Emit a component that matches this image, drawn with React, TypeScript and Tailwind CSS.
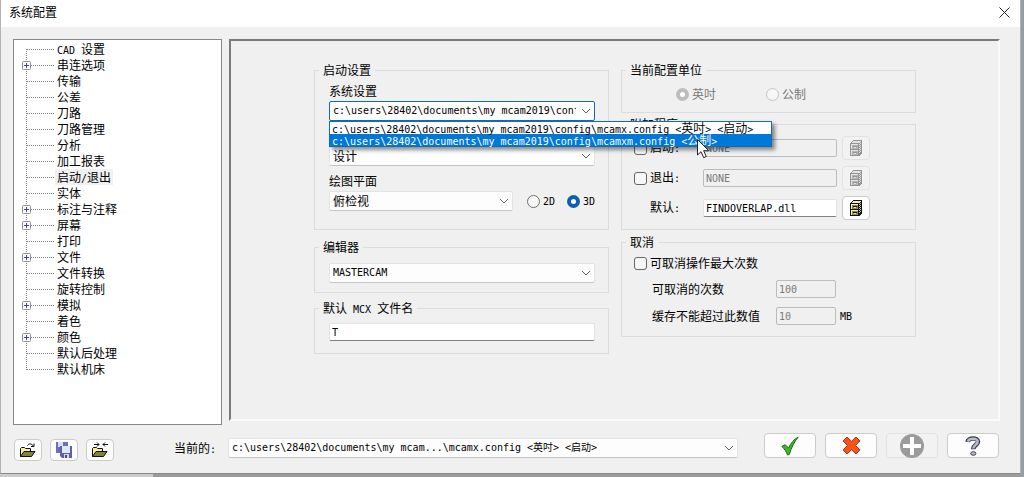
import React, { useState } from "react";
import clsx from "clsx";

const CONFIG_DIR = "c:\\users\\28402\\documents\\my mcam2019\\config\\";

const configFiles = [
  CONFIG_DIR + "mcamx.config <英吋> <启动>",
  CONFIG_DIR + "mcamxm.config <公制>",
];

const treeItems = [
  { label: "CAD 设置" },
  { label: "串连选项", expandable: true },
  { label: "传输" },
  { label: "公差" },
  { label: "刀路" },
  { label: "刀路管理" },
  { label: "分析" },
  { label: "加工报表" },
  { label: "启动/退出" },
  { label: "实体" },
  { label: "标注与注释", expandable: true },
  { label: "屏幕", expandable: true },
  { label: "打印" },
  { label: "文件", expandable: true },
  { label: "文件转换" },
  { label: "旋转控制" },
  { label: "模拟", expandable: true },
  { label: "着色" },
  { label: "颜色", expandable: true },
  { label: "默认后处理" },
  { label: "默认机床" },
];

// Latin runs are set in a half-width mono face, the rest stays in the CJK face
const Mixed = ({ text }: { text: string }) => (
  <>
    {text.split(/([\x20-\x7e]+)/).map((part, i) =>
      i % 2 ? (
        <span
          key={i}
          className="font-['DejaVu_Sans_Mono',monospace] text-[10px] whitespace-pre"
        >
          {part}
        </span>
      ) : (
        part
      )
    )}
  </>
);

const Combo = ({
  label,
  options,
  mono,
  open,
  className,
}: {
  label: string;
  options: string[];
  mono?: boolean;
  open?: boolean;
  className?: string;
}) => (
  <div className={clsx("relative h-5", className)}>
    <select
      aria-label={label}
      className={clsx(
        "block h-full w-full appearance-none rounded-xs border bg-[#fdfdfd] pr-[18px] pl-[3px] text-black outline-none",
        open ? "border-[#0f6cbd]" : "border-[#e3e3e3] border-b-[#c4c4c4]",
        mono
          ? "font-['DejaVu_Sans_Mono','Noto_Sans_CJK_SC',monospace] text-[10px]"
          : "text-xs leading-4"
      )}
    >
      {options.map((option) => (
        <option key={option}>{option}</option>
      ))}
    </select>
    <svg
      className="pointer-events-none absolute top-1.5 right-1 h-2 w-2.5"
      viewBox="0 0 10 8"
      fill="none"
      stroke="#606060"
    >
      <path d="M1 2l4 4 4-4" />
    </svg>
  </div>
);

const Group = ({
  title,
  className,
  children,
}: {
  title: string;
  className?: string;
  children: React.ReactNode;
}) => (
  <fieldset className="min-w-0 border border-[#dcdcdc] px-1">
    <legend className="h-4 px-1 leading-4">
      <Mixed text={title} />
    </legend>
    <div className={className}>{children}</div>
  </fieldset>
);

const Radio = ({
  name,
  label,
  checked,
  disabled,
}: {
  name: string;
  label: string;
  checked?: boolean;
  disabled?: boolean;
}) => (
  <label
    className={clsx(
      "flex items-center gap-[3px]",
      disabled && "text-[#7a7a7a]"
    )}
  >
    <input
      type="radio"
      name={name}
      defaultChecked={checked}
      disabled={disabled}
      className="size-[13px] appearance-none rounded-full border border-[#707070] bg-[#f7f7f7] checked:border-4 checked:border-[#0f5fb0] checked:bg-white disabled:border-[#c4c4c4] disabled:checked:border-[#bdbdbd]"
    />
    <span>
      <Mixed text={label} />
    </span>
  </label>
);

const Check = ({ label }: { label: string }) => (
  <label className="flex items-center gap-[3px]">
    <input
      type="checkbox"
      className="size-[13px] appearance-none rounded-[3px] border border-[#666] bg-[#f7f7f7] checked:bg-[#0f5fb0]"
    />
    <span>
      <Mixed text={label} />
    </span>
  </label>
);

const TextBox = ({
  label,
  value,
  disabled,
  className,
}: {
  label: string;
  value: string;
  disabled?: boolean;
  className?: string;
}) => (
  <input
    type="text"
    aria-label={label}
    defaultValue={value}
    disabled={disabled}
    className={clsx(
      "h-[18px] min-w-0 rounded-xs border px-0.5 font-['DejaVu_Sans_Mono',monospace] text-[10px] outline-none",
      disabled
        ? "border-[#bcbcbc] bg-[#f0f0f0] text-[#7a7a7a]"
        : "border-[#e3e3e3] border-b-[#808080] bg-white text-black",
      className
    )}
  />
);

const PushButton = ({
  label,
  disabled,
  className,
  children,
}: {
  label: string;
  disabled?: boolean;
  className?: string;
  children: React.ReactNode;
}) => (
  <button
    type="button"
    aria-label={label}
    disabled={disabled}
    className={clsx(
      "flex shrink-0 items-center justify-center rounded border",
      disabled ? "border-[#e2e2e2] bg-[#f2f2f2]" : "border-[#cbcbcb] bg-[#fdfdfd]",
      className
    )}
  >
    {children}
  </button>
);

const CabinetIcon = ({ muted }: { muted?: boolean }) => {
  const dark = muted ? "#949494" : "#111";
  const face = muted ? "#b4b4b4" : "#8f8a4c";
  const top = muted ? "#e4e4e4" : "#f3efb4";
  return (
    <svg className="h-4 w-3" viewBox="0 0 12 16" shapeRendering="crispEdges">
      <path d="M0 3l3-3h9v13l-3 3H0z" fill={dark} />
      <path d="M1 3l2-2h8L9 3z" fill={top} />
      <path d="M1 4h7v5H1zM1 10h7v5H1z" fill={face} />
      <path d="M1 4h7v1H1zM1 10h7v1H1zM1 4h1v5H1zM1 10h1v5H1z" fill={top} />
      <path d="M3 6h4v1H3zM3 12h4v1H3z" fill={dark} />
      <path d="M4 7h2v1H4zM4 13h2v1H4z" fill={top} />
      <path
        d="M9.500 4v10M10.500 3v10"
        stroke={muted ? "#e4e4e4" : "#c9c9c9"}
        strokeDasharray="1 1"
      />
    </svg>
  );
};

const FolderIcon = ({ merge }: { merge?: boolean }) => (
  <svg className="h-4 w-[18px]" viewBox="0 0 18 16">
    <path
      d="M1.500 14.500v-8l1-1h3l1 1h5v3"
      fill="#f6efa0"
      stroke="#111"
    />
    <path d="M1.500 14.500l3.500-5h11l-3.500 5z" fill="#85803a" stroke="#111" />
    {merge ? (
      <path
        d="M3 2.500h5M6 .5l2 2-2 2M17 2.500h-5M14 .5l-2 2 2 2"
        fill="none"
        stroke="#111"
      />
    ) : (
      <path
        d="M8.500 3.500c1-2 4-2.500 6 .8M15 1.500v3h-3"
        fill="none"
        stroke="#111"
      />
    )}
  </svg>
);

const SaveIcon = () => (
  <svg className="size-4" viewBox="0 0 16 16">
    <path d="M0 0h12v11H0z" fill="#6c70b8" />
    <path d="M2 0h5v5H2z" fill="#d5e2f2" />
    <path d="M4 4h12v12H6l-2-2z" fill="#5c60ad" />
    <path d="M6 4h8v7H6z" fill="#dce9f6" />
    <path d="M8 12h5v4H8z" fill="#d3d5ea" />
    <path d="M9 13h2v3H9z" fill="#4a4d94" />
  </svg>
);

const TreeLine = ({
  first,
  last,
  expandable,
}: {
  first: boolean;
  last: boolean;
  expandable?: boolean;
}) => (
  <svg className="h-4 w-8 shrink-0" viewBox="0 0 32 16" fill="none">
    <path
      d={first ? "M4.500 8v8" : last ? "M4.500 0v9" : "M4.500 0v16"}
      stroke="#808080"
      strokeDasharray="1 1"
    />
    <path d="M5 8.500h27" stroke="#808080" strokeDasharray="1 1" />
    {expandable && (
      <>
        <rect x="0.500" y="4.500" width="8" height="8" rx="1" fill="#fafafa" stroke="#919191" />
        <path d="M2 8.500h5M4.500 6v5" stroke="#3c4a86" />
      </>
    )}
  </svg>
);

const App: React.FC = () => {
  const [selected, setSelected] = useState("启动/退出");
  const [highlighted, setHighlighted] = useState(1);

  return (
    <div className="min-h-screen bg-[#979ca5] pr-[3px] font-['Noto_Sans_CJK_SC',sans-serif] text-xs leading-4 text-black">
      <div className="border-r border-b border-l border-[#b4b4b4] border-b-[#8a8a8a] bg-[#f0f0f0]">
        <header className="flex h-[27px] items-center justify-between bg-white pr-2.5 pb-[3px] pl-2">
          <h1>系统配置</h1>
          <button type="button" aria-label="关闭">
            <svg className="size-[11px]" viewBox="0 0 11 11" stroke="#222">
              <path d="M.5.5l10 10M10.500.5l-10 10" />
            </svg>
          </button>
        </header>

        <main className="flex gap-[7px] pt-3 pr-5 pl-3">
          <ul className="w-[209px] shrink-0 border border-[#828790] bg-white pt-px pb-[47px] pl-2">
            {treeItems.map((item, i) => (
              <li key={item.label} className="flex h-4">
                <TreeLine
                  first={i === 0}
                  last={i === treeItems.length - 1}
                  expandable={item.expandable}
                />
                <button
                  type="button"
                  onClick={() => setSelected(item.label)}
                  className={clsx(
                    "ml-px px-0.5",
                    selected === item.label && "bg-[#f0f0f0]"
                  )}
                >
                  <Mixed text={item.label} />
                </button>
              </li>
            ))}
          </ul>

          <section className="mb-1 grid flex-1 grid-cols-2 items-start gap-3 border-2 border-t-[#7a7a7a] border-r-[#fafafa] border-b-[#fafafa] border-l-[#7a7a7a] pt-[21px] pr-[82px] pl-[83px]">
            <div className="flex min-w-0 flex-col">
              <Group title="启动设置" className="pt-[5px] pr-[9px] pb-[18px] pl-2.5">
                <p>系统设置</p>
                <div className="relative mt-0.5">
                  <Combo label="系统设置" options={configFiles} mono open />
                  <ul
                    role="listbox"
                    aria-label="配置文件"
                    className="absolute top-5 left-0 z-10 w-[443px] border border-[#0f6cbd] bg-white shadow-[3px_3px_4px_rgba(0,0,0,0.45)]"
                  >
                    {configFiles.map((file, i) => (
                      <li
                        key={file}
                        role="option"
                        aria-selected={i === highlighted}
                        onMouseEnter={() => setHighlighted(i)}
                        className={clsx(
                          "h-3 pl-0.5 leading-[11px] whitespace-nowrap",
                          i === highlighted && "bg-[#0078d7] text-white"
                        )}
                      >
                        <Mixed text={file} />
                      </li>
                    ))}
                  </ul>
                  <svg
                    className="pointer-events-none absolute top-[38px] left-[368px] z-20 h-5 w-[13px]"
                    viewBox="0 0 13 20"
                  >
                    <path
                      d="M.5.5v15.500l3.500-3.300 2.700 6 2.600-1.200-2.600-5.800h5z"
                      fill="#fff"
                      stroke="#222"
                    />
                  </svg>
                </div>
                <Combo label="默认功能" options={["设计"]} className="mt-[25px]" />
                <p className="mt-[7px]">绘图平面</p>
                <div className="mt-0.5 flex items-center gap-3.5">
                  <Combo label="绘图平面" options={["俯检视"]} className="flex-1" />
                  <div className="flex gap-3">
                    <Radio name="plane" label="2D" />
                    <Radio name="plane" label="3D" checked />
                  </div>
                </div>
              </Group>
              <div className="mt-[9px]">
                <Group title="编辑器" className="pt-2 pr-[9px] pb-[9px] pl-2.5">
                  <Combo label="编辑器" options={["MASTERCAM"]} mono />
                </Group>
              </div>
              <div className="mt-[7px]">
                <Group
                  title="默认 MCX 文件名"
                  className="flex pt-[7px] pr-[9px] pb-3 pl-2.5"
                >
                  <TextBox label="默认 MCX 文件名" value="T" className="flex-1" />
                </Group>
              </div>
            </div>

            <div className="flex min-w-0 flex-col">
              <Group title="当前配置单位" className="flex gap-[50px] pt-2 pb-2.5 pl-[50px]">
                <Radio name="unit" label="英吋" checked disabled />
                <Radio name="unit" label="公制" disabled />
              </Group>
              <div className="mt-[3px]">
                <Group
                  title="附加程序"
                  className="flex flex-col gap-1.5 pt-1 pr-[41px] pb-[9px] pl-2"
                >
                  <div className="flex items-center gap-[5px]">
                    <div className="w-16 shrink-0">
                      <Check label="启动:" />
                    </div>
                    <TextBox label="启动程序" value="NONE" disabled className="flex-1" />
                    <PushButton label="选择启动程序" disabled className="h-6 w-7">
                      <CabinetIcon muted />
                    </PushButton>
                  </div>
                  <div className="flex items-center gap-[5px]">
                    <div className="w-16 shrink-0">
                      <Check label="退出:" />
                    </div>
                    <TextBox label="退出程序" value="NONE" disabled className="flex-1" />
                    <PushButton label="选择退出程序" disabled className="h-6 w-7">
                      <CabinetIcon muted />
                    </PushButton>
                  </div>
                  <div className="flex items-center gap-[5px]">
                    <span className="w-16 shrink-0 pl-4">
                      <Mixed text="默认:" />
                    </span>
                    <TextBox label="默认程序" value="FINDOVERLAP.dll" className="flex-1" />
                    <PushButton label="选择默认程序" className="h-6 w-7">
                      <CabinetIcon />
                    </PushButton>
                  </div>
                </Group>
              </div>
              <div className="mt-1">
                <Group
                  title="取消"
                  className="flex flex-col gap-[9px] pt-[5px] pb-[11px] pl-2"
                >
                  <Check label="可取消操作最大次数" />
                  <div className="flex items-center pl-[18px]">
                    <span className="w-31">可取消的次数</span>
                    <TextBox label="可取消的次数" value="100" disabled className="w-15" />
                  </div>
                  <div className="flex items-center pl-[18px]">
                    <span className="w-31">缓存不能超过此数值</span>
                    <TextBox label="缓存不能超过此数值" value="10" disabled className="w-15" />
                    <span className="pl-1">
                      <Mixed text="MB" />
                    </span>
                  </div>
                </Group>
              </div>
            </div>
          </section>
        </main>

        <footer className="flex items-start pt-2 pr-[21px] pb-3 pl-[13px]">
          <div className="flex gap-2 pt-1.5">
            <PushButton label="打开" className="h-[22px] w-7">
              <FolderIcon />
            </PushButton>
            <PushButton label="另存为" className="h-[22px] w-7">
              <SaveIcon />
            </PushButton>
            <PushButton label="合并" className="h-[22px] w-7">
              <FolderIcon merge />
            </PushButton>
          </div>
          <span className="ml-[60px] w-[54px] shrink-0 pt-[7px]">
            <Mixed text="当前的:" />
          </span>
          <Combo
            label="当前的"
            options={["c:\\users\\28402\\documents\\my mcam...\\mcamx.config <英吋> <启动>"]}
            mono
            className="mt-[5px] flex-1"
          />
          <div className="ml-[26px] flex gap-[9px]">
            <PushButton label="确定" className="h-[25px] w-[52px]">
              <svg className="h-5 w-[18px]" viewBox="0 0 18 20">
                <path
                  d="M.8 10.500l3.400-1.800 3.300 3.400C9.500 7.500 13 3.200 17.200 1 13.500 5.500 10.500 11.500 8.200 18.500L6.500 19C5.200 15.500 3.500 12.800.8 10.500z"
                  fill="#3fb528"
                  stroke="#1b6b14"
                />
              </svg>
            </PushButton>
            <PushButton label="取消" className="h-[25px] w-[52px]">
              <svg className="size-[19px]" viewBox="0 0 19 19">
                <path
                  d="M5 1l4.500 4.300L14 1l4 4-4.500 4.500L18 14l-4 4-4.500-4.300L5 18l-4-4 4.500-4.500L1 5z"
                  fill="#f4541a"
                  stroke="#b5330c"
                  strokeLinejoin="round"
                />
              </svg>
            </PushButton>
            <PushButton label="应用" disabled className="h-[25px] w-[52px]">
              <svg className="size-6" viewBox="0 0 24 24">
                <circle cx="12" cy="12" r="12" fill="#9b9b9b" />
                <path d="M12 3v18M3 12h18" stroke="#fff" strokeWidth="4" />
              </svg>
            </PushButton>
            <PushButton label="帮助" className="h-[25px] w-[52px]">
              <svg className="h-5 w-4" viewBox="0 0 16 20" fill="none">
                <path
                  d="M2.500 6C3 1.500 13 1 13 5.800c0 3.200-4.700 3-4.700 7.400"
                  stroke="#3c3f52"
                  strokeWidth="4.500"
                />
                <path
                  d="M2.900 5.600C4 2 12.700 1.700 12.700 5.800c0 3-4.400 3.200-4.400 6.800"
                  stroke="#b9bccb"
                  strokeWidth="2.500"
                />
                <ellipse cx="8.300" cy="17.500" rx="2.600" ry="1.800" fill="#b9bccb" stroke="#3c3f52" />
              </svg>
            </PushButton>
          </div>
        </footer>
      </div>
      {/* window behind the dialog */}
      <div className="h-[3px] bg-[#9b9b9b]">
        <div className="h-full w-[15%] bg-[#cdcdcd]" />
      </div>
    </div>
  );
};

export default App;
